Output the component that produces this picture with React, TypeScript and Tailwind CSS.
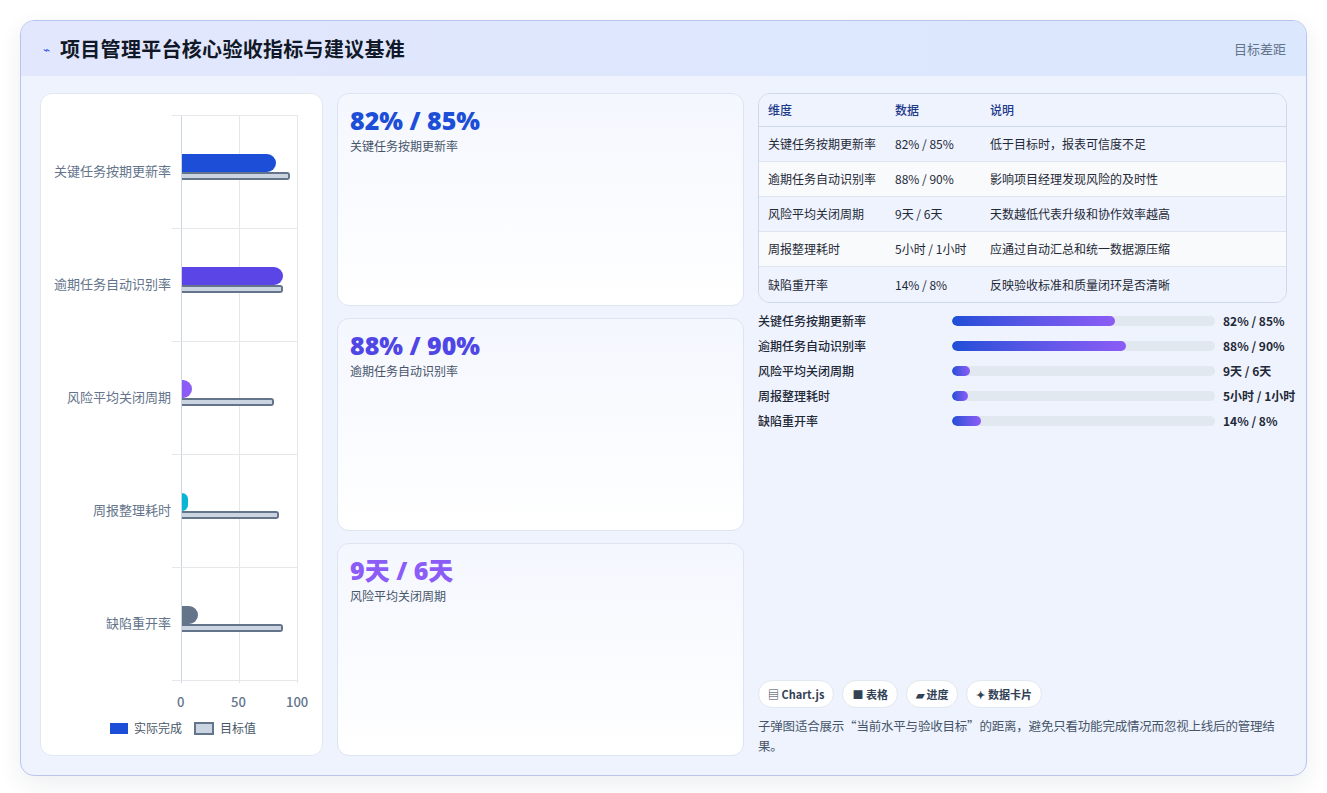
import React from "react";

const rows = [
  { name: "关键任务按期更新率", val: "82% / 85%", desc: "低于目标时，报表可信度不足", a: 94, t: 108, c: "#1d4ed8", p: 62 },
  { name: "逾期任务自动识别率", val: "88% / 90%", desc: "影响项目经理发现风险的及时性", a: 101, t: 101, c: "#5b45e6", p: 66 },
  { name: "风险平均关闭周期", val: "9天 / 6天", desc: "天数越低代表升级和协作效率越高", a: 10, t: 92, c: "#8b5cf6", p: 7 },
  { name: "周报整理耗时", val: "5小时 / 1小时", desc: "应通过自动汇总和统一数据源压缩", a: 6, t: 97, c: "#06b6d4", p: 6 },
  { name: "缺陷重开率", val: "14% / 8%", desc: "反映验收标准和质量闭环是否清晰", a: 16, t: 101, c: "#64748b", p: 11 },
];

const cards = [
  { v: "82% / 85%", l: "关键任务按期更新率", c: "text-[#1d4ed8]" },
  { v: "88% / 90%", l: "逾期任务自动识别率", c: "text-[#4f46e5]" },
  { v: "9天 / 6天", l: "风险平均关闭周期", c: "text-[#8b5cf6]" },
];

export default function App() {
  return (
    <div className="w-[1327px] h-[793px] bg-white pt-[20px] pl-[20px]" style={{ fontFamily: '"Noto Sans CJK SC", "Noto Sans", sans-serif' }}>
      <div className="w-[1287px] h-[756px] rounded-[14px] border border-[#b9c5ee] bg-[#eef3fe] overflow-hidden shadow-[0_8px_24px_rgba(30,41,59,0.08)] flex flex-col">
        <div className="h-[55px] shrink-0 flex items-center justify-between px-[20px] bg-gradient-to-r from-[#e2e7fd] to-[#dae7fd]">
          <div className="flex items-center gap-[10px] pl-[2px]">
            <span className="text-[#3b5bdb] text-[12px]">⌁</span>
            <span className="text-[20px] font-bold text-[#111827] tracking-[0.3px]">项目管理平台核心验收指标与建议基准</span>
          </div>
          <span className="text-[13px] text-[#64748b]">目标差距</span>
        </div>
        <div className="flex-1 flex gap-[14px] px-[19px] pt-[17px] pb-[19px]">
          <div className="w-[283px] bg-white rounded-[12px] border border-[#e2e8f0] relative">
            <div className="absolute left-[140px] top-[21px] w-[116px] h-[568px] border-l border-[#cbd5e1]">
              <div className="absolute left-[57px] top-0 bottom-0 w-px bg-[#e5e7eb]" />
              <div className="absolute left-[115px] top-0 bottom-0 w-px bg-[#e5e7eb]" />
              <div className="absolute -left-[10px] right-0 top-0 h-px bg-[#e5e7eb]" />
              {rows.map((r, i) => (
                <React.Fragment key={i}>
                  <div className="absolute -left-[10px] right-0 h-px bg-[#e5e7eb]" style={{ top: 113 * (i + 1) }} />
                  <div className="absolute right-[126px] whitespace-nowrap text-[13px] text-[#64748b]" style={{ top: 113 * i + 46 }}>{r.name}</div>
                  <div className="absolute left-0 h-[18px] rounded-r-[9px]" style={{ top: 113 * i + 39, width: r.a, background: r.c }} />
                  <div className="absolute left-0 h-[8px] rounded-r-[3px] bg-[#cbd5e1] border-2 border-[#64748b] border-l-0" style={{ top: 113 * i + 57, width: r.t }} />
                </React.Fragment>
              ))}
            </div>
            <div className="absolute top-[598px] left-[136px] text-[13px] text-[#64748b] font-medium">0</div>
            <div className="absolute top-[598px] left-[190px] text-[13px] text-[#64748b] font-medium">50</div>
            <div className="absolute top-[598px] left-[245px] text-[13px] text-[#64748b] font-medium">100</div>
            <div className="absolute top-[625px] left-[69px] flex items-center gap-[6px] text-[12px] text-[#475569]">
              <span className="w-[18px] h-[11px] bg-[#1d4ed8]" />实际完成
              <span className="ml-[6px] w-[20px] h-[13px] bg-[#cbd5e1] border-2 border-[#64748b]" />目标值
            </div>
          </div>
          <div className="w-[407px] flex flex-col gap-[12px]">
            {cards.map((c, i) => (
              <div key={i} className="flex-1 rounded-[12px] border border-[#dde4f2] bg-gradient-to-b from-[#f4f7fe] to-white px-[12px] pt-[9px]">
                <div className={`text-[25px] font-extrabold leading-[34px] ${c.c}`} style={{ fontFamily: '"Open Sans", "Noto Sans CJK SC", sans-serif' }}>{c.v}</div>
                <div className="text-[12px] text-[#475569]">{c.l}</div>
              </div>
            ))}
          </div>
          <div className="flex-1 flex flex-col">
            <div className="rounded-[12px] border border-[#cfd8ea] overflow-hidden text-[12px] text-[#1f2937]">
              <div className="flex h-[33px] items-center bg-[#eef3fe] border-b border-[#cfd8ea] text-[#1e3a8a] font-medium">
                <div className="w-[136px] pl-[9px]">维度</div><div className="w-[95px]">数据</div><div>说明</div>
              </div>
              {rows.map((r, i) => (
                <div key={i} className={`flex h-[35px] items-center ${i % 2 ? "bg-[#f8fafc]" : "bg-[#eef3fe]"} ${i < 4 ? "border-b border-[#dfe5f0]" : ""}`}>
                  <div className="w-[136px] pl-[9px]">{r.name}</div><div className="w-[95px]">{r.val}</div><div>{r.desc}</div>
                </div>
              ))}
            </div>
            <div className="mt-[9px] flex flex-col gap-[7px]">
              {rows.map((r, i) => (
                <div key={i} className="flex items-center h-[18px] text-[12px] font-medium text-[#1f2937]">
                  <div className="w-[194px]">{r.name}</div>
                  <div className="flex-1 h-[10px] rounded-full bg-[#e2e8f0] overflow-hidden">
                    <div className="h-full rounded-full bg-gradient-to-r from-[#1d4ed8] to-[#8b5cf6]" style={{ width: `${r.p}%` }} />
                  </div>
                  <div className="w-[72px] pl-[8px] font-bold whitespace-nowrap">{r.val}</div>
                </div>
              ))}
            </div>
            <div className="flex-1" />
            <div className="flex gap-[8px] text-[11px] font-semibold text-[#334155]">
              {["▤ Chart.js", "■ 表格", "▰ 进度", "✦ 数据卡片"].map((t) => (
                <span key={t} className="px-[9px] h-[28px] flex items-center rounded-full bg-white border border-[#e2e8f0]">{t}</span>
              ))}
            </div>
            <p className="mt-[8px] text-[12.5px] leading-[20px] text-[#475569] tracking-[-0.2px]">子弹图适合展示“当前水平与验收目标”的距离，避免只看功能完成情况而忽视上线后的管理结果。</p>
          </div>
        </div>
      </div>
    </div>
  );
}
